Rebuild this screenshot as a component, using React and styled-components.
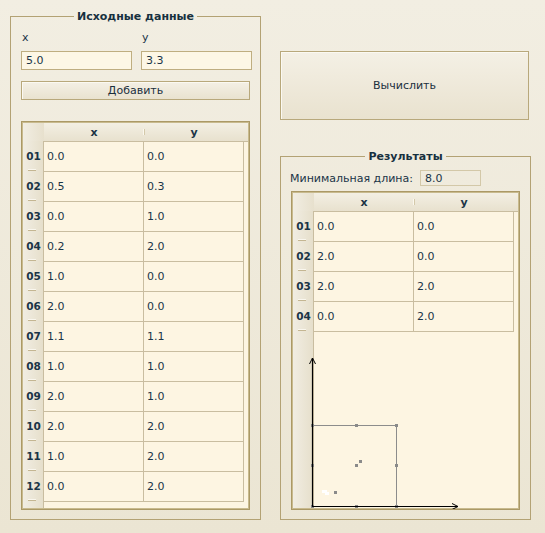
import React from "react";
import styled, { createGlobalStyle } from "styled-components";

const GlobalStyle = createGlobalStyle`
  html, body { margin: 0; padding: 0; height: 100%; }
  body {
    background: linear-gradient(180deg, #f2eee2 0%, #ebe5d3 100%);
    font-family: "DejaVu Sans", "Noto Sans", sans-serif;
    font-size: 11px;
    color: #1a3447;
  }
  #root { height: 100%; }
`;

const Window = styled.div`
  box-sizing: border-box;
  height: 533px;
  width: 545px;
  display: flex;
  gap: 19px;
  padding: 10px 14px 13px 10px;
`;

const Group = styled.fieldset`
  box-sizing: border-box;
  width: 251px;
  margin: ${(p) => (p.$mt ? `${p.$mt}px 0 0 0` : "0")};
  min-width: 0;
  border: 1px solid #b3a274;
  padding: ${(p) => p.$pad};
  display: flex;
  flex-direction: column;
  flex: ${(p) => (p.$grow ? 1 : "none")};
`;

const Legend = styled.legend`
  margin: 0 auto;
  padding: 0 3px;
  font-weight: bold;
  line-height: 13px;
  color: #17303f;
`;

const Column = styled.div`
  display: flex;
  flex-direction: column;
  width: 251px;
`;

const FormGrid = styled.div`
  display: grid;
  grid-template-columns: 111px 111px;
  column-gap: 9px;
  row-gap: 7px;
`;

const FieldLabel = styled.div`
  line-height: 13px;
  padding-left: 1px;
`;

const Input = styled.div`
  box-sizing: border-box;
  height: ${(p) => (p.$h ? p.$h : 19)}px;
  width: ${(p) => (p.$w ? `${p.$w}px` : "auto")};
  border: 1px solid ${(p) => (p.$readonly ? "#d3c8a8" : "#bfae80")};
  background: ${(p) => (p.$readonly ? "transparent" : "#fdf7e5")};
  padding-left: 4px;
  display: flex;
  align-items: center;
  line-height: 13px;
`;

const Button = styled.div`
  box-sizing: border-box;
  height: ${(p) => p.$h}px;
  margin-top: ${(p) => p.$mt}px;
  width: ${(p) => (p.$w ? `${p.$w}px` : "auto")};
  border: 1px solid #b8a87b;
  box-shadow: inset 1px 1px 0 #fbf9f2;
  background: linear-gradient(180deg, #f4f0e5 0%, #e9e2cf 100%);
  display: flex;
  align-items: center;
  justify-content: center;
  color: #1b2f3d;
`;

const Table = styled.div`
  position: relative;
  box-sizing: border-box;
  flex: 1;
  margin-top: ${(p) => p.$mt}px;
  border: 1px solid #ab9966;
  box-shadow: inset 0 0 0 1px #c8ba8e;
  padding: 1px;
  display: flex;
  flex-direction: column;
  overflow: hidden;
`;

const Header = styled.div`
  display: flex;
  height: 18px;
  background: linear-gradient(180deg, #f3efe3 0%, #e8e1ce 100%);
  font-weight: bold;
  color: #1b3446;
`;

const Corner = styled.div`
  width: 21px;
  background: linear-gradient(90deg, #f1ede2 0%, #e7e0cd 100%);
`;

const HeadCell = styled.div`
  position: relative;
  width: 100px;
  display: flex;
  align-items: center;
  justify-content: center;
  line-height: 13px;
  &::after {
    content: "";
    display: ${(p) => (p.$tick ? "block" : "none")};
    position: absolute;
    right: 0;
    top: 6px;
    width: 1px;
    height: 6px;
    background: #fbf8ef;
    box-shadow: 1px 0 0 #d4c9aa;
  }
`;

const Body = styled.div`
  flex: 1;
  display: flex;
`;

const RowHeads = styled.div`
  width: 20px;
  background: linear-gradient(90deg, #f1ede2 0%, #e6dfcb 100%);
  display: flex;
  flex-direction: column;
`;

const RowHead = styled.div`
  position: relative;
  height: 30px;
  display: flex;
  align-items: center;
  justify-content: center;
  font-weight: bold;
  font-size: 10.5px;
  padding-left: 1px;
  box-sizing: border-box;
  &::after {
    content: "";
    position: absolute;
    left: 5px;
    bottom: 0;
    width: 8px;
    height: 1px;
    background: #c4b692;
    box-shadow: 0 -1px 0 #faf7ee;
  }
`;

const Cells = styled.div`
  flex: 1;
  background: #fdf5e2;
  border-left: 1px solid #c9bda0;
  border-top: 1px solid #c9bda0;
  display: flex;
  flex-direction: column;
`;

const Row = styled.div`
  display: flex;
  height: 30px;
`;

const Cell = styled.div`
  box-sizing: border-box;
  width: 100px;
  border-right: 1px solid #c9bda0;
  border-bottom: 1px solid #c9bda0;
  padding-left: 3px;
  display: flex;
  align-items: center;
`;

const InfoRow = styled.div`
  display: flex;
  align-items: center;
  margin-left: -1px;
`;

const InfoLabel = styled.div`
  width: 130px;
  line-height: 13px;
`;

const Plot = styled.svg`
  position: absolute;
  left: 0;
  top: 0;
  width: 100%;
  height: 100%;
  pointer-events: none;
  overflow: visible;
`;

const srcData = [
  ["0.0", "0.0"],
  ["0.5", "0.3"],
  ["0.0", "1.0"],
  ["0.2", "2.0"],
  ["1.0", "0.0"],
  ["2.0", "0.0"],
  ["1.1", "1.1"],
  ["1.0", "1.0"],
  ["2.0", "1.0"],
  ["2.0", "2.0"],
  ["1.0", "2.0"],
  ["0.0", "2.0"],
];

const resData = [
  ["0.0", "0.0"],
  ["2.0", "0.0"],
  ["2.0", "2.0"],
  ["0.0", "2.0"],
];

const pad2 = (n) => String(n).padStart(2, "0");

function DataTable({ rows, mt, children }) {
  return (
    <Table $mt={mt}>
      <Header>
        <Corner />
        <HeadCell $tick>x</HeadCell>
        <HeadCell>y</HeadCell>
      </Header>
      <Body>
        <RowHeads>
          {rows.map((_, i) => (
            <RowHead key={i}>{pad2(i + 1)}</RowHead>
          ))}
        </RowHeads>
        <Cells>
          {rows.map((r, i) => (
            <Row key={i}>
              <Cell>{r[0]}</Cell>
              <Cell>{r[1]}</Cell>
            </Row>
          ))}
        </Cells>
      </Body>
      {children}
    </Table>
  );
}

const dots = [
  [20, 233], [64, 233], [104, 233],
  [20, 273], [104, 273],
  [20, 314], [64, 314], [104, 314],
  [68, 269], [64, 273], [43, 300],
];

export default function App() {
  return (
    <>
      <GlobalStyle />
      <Window>
        <Group $pad="8px 10px 9px 10px">
          <Legend>Исходные данные</Legend>
          <FormGrid>
            <FieldLabel>x</FieldLabel>
            <FieldLabel>y</FieldLabel>
            <Input>5.0</Input>
            <Input>3.3</Input>
          </FormGrid>
          <Button $h={19} $mt={11}>Добавить</Button>
          <DataTable rows={srcData} mt={21} />
        </Group>
        <Column>
          <Button $h={69} $mt={41} $w={249}>Вычислить</Button>
          <Group $grow $mt={30} $pad="7px 10px 9px 10px">
            <Legend>Результаты</Legend>
            <InfoRow>
              <InfoLabel>Минимальная длина:</InfoLabel>
              <Input $readonly $w={61} $h={16}>8.0</Input>
            </InfoRow>
            <DataTable rows={resData} mt={5}>
              <Plot>
                <rect x="20.5" y="233.5" width="84" height="81" fill="none" stroke="#8c8c8c" strokeWidth="1" />
                {dots.map(([x, y], i) => (
                  <rect key={i} x={x - 1} y={y - 1} width="3" height="3" fill="#8a8a8a" />
                ))}
                <rect x="30" y="298" width="5" height="3" fill="#ffffff" />
                <rect x="33" y="300" width="4" height="3" fill="#ffffff" />
                <line x1="20.5" y1="166" x2="20.5" y2="314.5" stroke="#000" strokeWidth="1.2" />
                <polyline points="17.5,172 20.5,166 23.5,172" fill="none" stroke="#000" strokeWidth="1" />
                <line x1="20" y1="314.5" x2="166" y2="314.5" stroke="#000" strokeWidth="1.2" />
                <polyline points="160,311.5 166,314.5 160,317.5" fill="none" stroke="#000" strokeWidth="1" />
              </Plot>
            </DataTable>
          </Group>
        </Column>
      </Window>
    </>
  );
}
